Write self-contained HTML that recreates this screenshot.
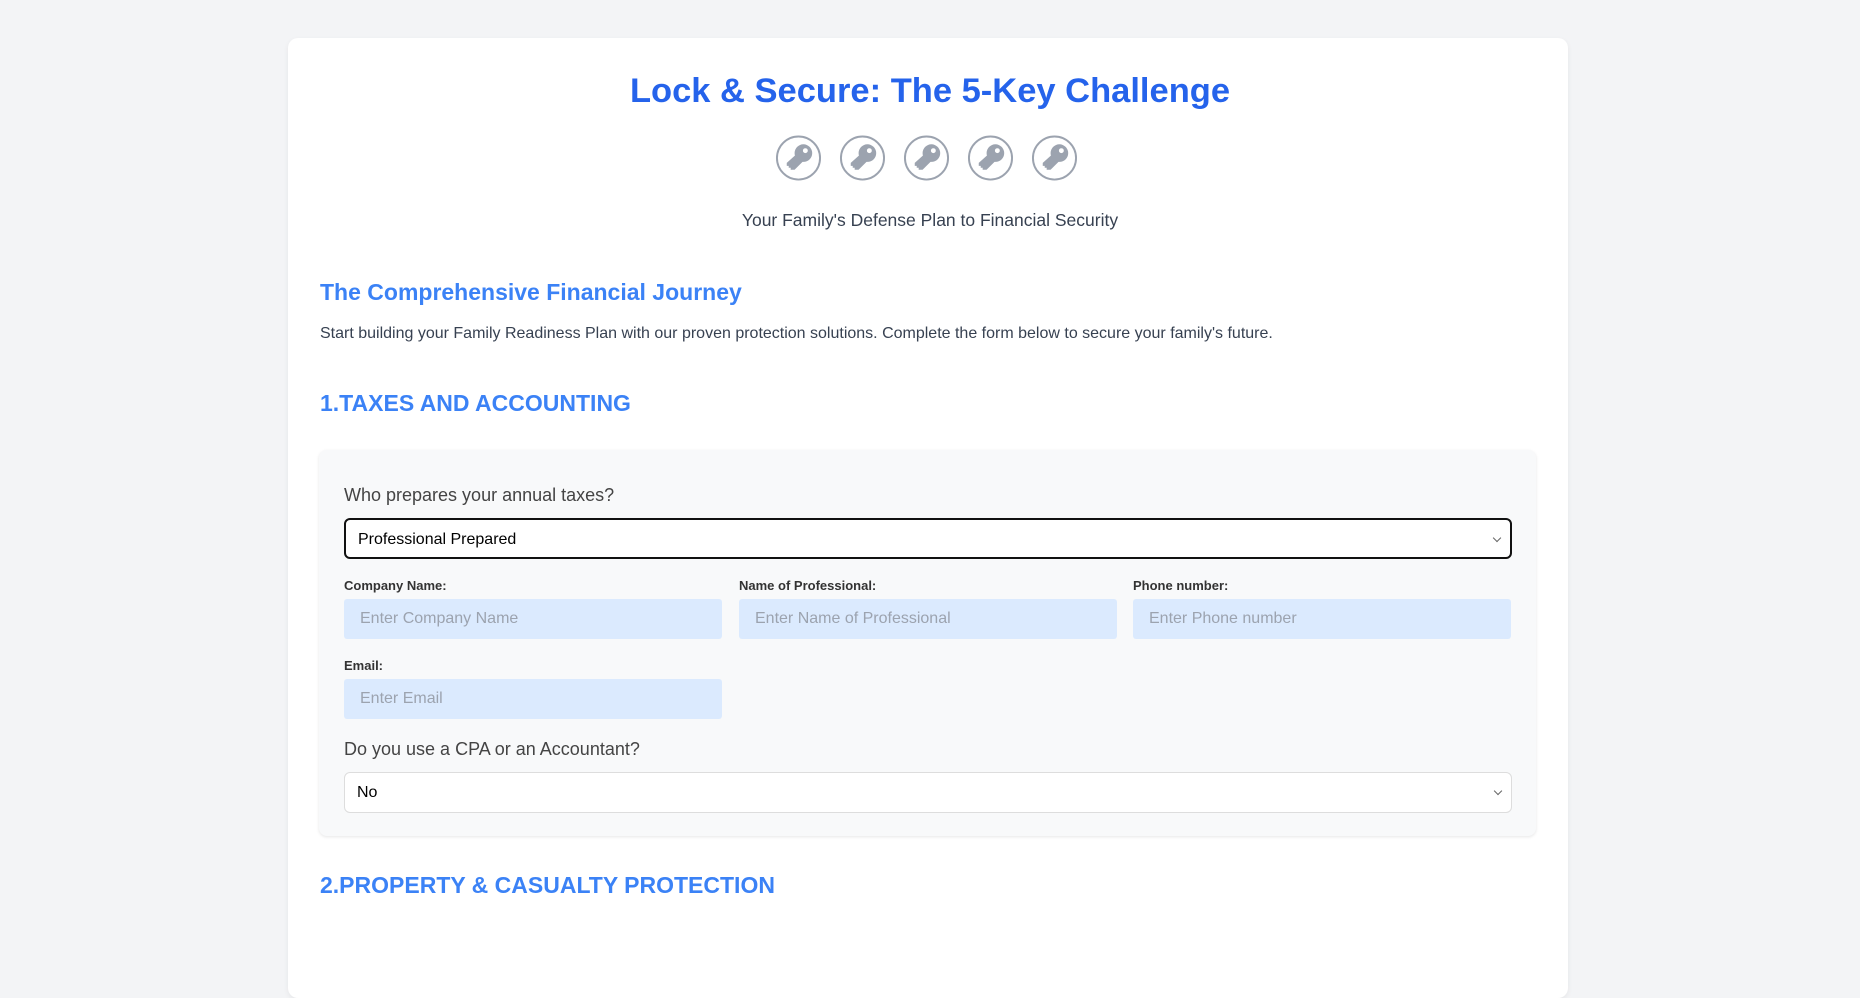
<!DOCTYPE html>
<html><head><meta charset="utf-8"><style>
*{box-sizing:border-box;margin:0;padding:0}
body{width:1860px;height:932px;overflow:hidden;background:#f3f4f6;font-family:"Liberation Sans",sans-serif;position:relative}
.card{position:absolute;left:288px;top:38px;width:1280px;height:960px;background:#fff;border-radius:10px;box-shadow:0 2px 6px rgba(0,0,0,.06)}
h1{position:absolute;left:0;width:1860px;text-align:center;top:72px;font-size:34.5px;color:#2563eb;font-weight:bold}
.keys{position:absolute;top:134px;left:-4px;width:1860px;display:flex;justify-content:center;gap:17px}
.keys svg{width:47px;height:48px}
.sub{position:absolute;top:210px;width:1860px;text-align:center;font-size:17.5px;color:#374151}
.h2{position:absolute;left:320px;font-size:23px;font-weight:bold;color:#3b82f6}
.p{position:absolute;left:320px;top:325px;font-size:16px;color:#374151}
.box{position:absolute;left:319px;top:450px;width:1217px;height:386px;background:#f8f9fa;border-radius:8px;box-shadow:0 1px 3px rgba(0,0,0,.1)}
.lbl{position:absolute;font-size:18px;color:#444}
.sel{position:absolute;left:344px;width:1168px;height:41px;background:#fff;border-radius:6px;font-size:16px;padding:0 12px;line-height:39px;color:#000}
.sel:after{content:"";position:absolute;right:10px;top:15px;width:5px;height:5px;border-right:1.5px solid #666;border-bottom:1.5px solid #666;transform:rotate(45deg)}
.fl{position:absolute;font-size:13px;font-weight:bold;color:#333}
.in{position:absolute;width:378px;height:40px;background:#dbeafe;border-radius:3px;font-size:16px;color:#9ca3af;padding-left:16px;line-height:40px}
</style></head><body>
<div class="card"></div>
<h1>Lock &amp; Secure: The 5-Key Challenge</h1>
<div class="keys">
<svg viewBox="0 0 48 48"><circle cx="24" cy="24" r="22" fill="none" stroke="#9ca3af" stroke-width="2"/><path d="M29 10a9 9 0 1 1 0 18a9 9 0 1 1 0-18zM31 14a2.5 2.5 0 1 0 0 5a2.5 2.5 0 1 0 0-5z" fill="#9ca3af" fill-rule="evenodd"/><path d="M22 20 29 27 20 36H16V34H14V32H12V29Z" fill="#9ca3af"/></svg>
<svg viewBox="0 0 48 48"><circle cx="24" cy="24" r="22" fill="none" stroke="#9ca3af" stroke-width="2"/><path d="M29 10a9 9 0 1 1 0 18a9 9 0 1 1 0-18zM31 14a2.5 2.5 0 1 0 0 5a2.5 2.5 0 1 0 0-5z" fill="#9ca3af" fill-rule="evenodd"/><path d="M22 20 29 27 20 36H16V34H14V32H12V29Z" fill="#9ca3af"/></svg>
<svg viewBox="0 0 48 48"><circle cx="24" cy="24" r="22" fill="none" stroke="#9ca3af" stroke-width="2"/><path d="M29 10a9 9 0 1 1 0 18a9 9 0 1 1 0-18zM31 14a2.5 2.5 0 1 0 0 5a2.5 2.5 0 1 0 0-5z" fill="#9ca3af" fill-rule="evenodd"/><path d="M22 20 29 27 20 36H16V34H14V32H12V29Z" fill="#9ca3af"/></svg>
<svg viewBox="0 0 48 48"><circle cx="24" cy="24" r="22" fill="none" stroke="#9ca3af" stroke-width="2"/><path d="M29 10a9 9 0 1 1 0 18a9 9 0 1 1 0-18zM31 14a2.5 2.5 0 1 0 0 5a2.5 2.5 0 1 0 0-5z" fill="#9ca3af" fill-rule="evenodd"/><path d="M22 20 29 27 20 36H16V34H14V32H12V29Z" fill="#9ca3af"/></svg>
<svg viewBox="0 0 48 48"><circle cx="24" cy="24" r="22" fill="none" stroke="#9ca3af" stroke-width="2"/><path d="M29 10a9 9 0 1 1 0 18a9 9 0 1 1 0-18zM31 14a2.5 2.5 0 1 0 0 5a2.5 2.5 0 1 0 0-5z" fill="#9ca3af" fill-rule="evenodd"/><path d="M22 20 29 27 20 36H16V34H14V32H12V29Z" fill="#9ca3af"/></svg>
</div>
<div class="sub">Your Family's Defense Plan to Financial Security</div>
<div class="h2" style="top:279px">The Comprehensive Financial Journey</div>
<div class="p">Start building your Family Readiness Plan with our proven protection solutions. Complete the form below to secure your family's future.</div>
<div class="h2" style="top:390px">1.TAXES AND ACCOUNTING</div>
<div class="box"></div>
<div class="lbl" style="left:344px;top:485px">Who prepares your annual taxes?</div>
<div class="sel" style="top:518px;border:2px solid #111">Professional Prepared</div>
<div class="fl" style="left:344px;top:578px">Company Name:</div>
<div class="fl" style="left:739px;top:578px">Name of Professional:</div>
<div class="fl" style="left:1133px;top:578px">Phone number:</div>
<div class="in" style="left:344px;top:599px">Enter Company Name</div>
<div class="in" style="left:739px;top:599px">Enter Name of Professional</div>
<div class="in" style="left:1133px;top:599px">Enter Phone number</div>
<div class="fl" style="left:344px;top:658px">Email:</div>
<div class="in" style="left:344px;top:679px">Enter Email</div>
<div class="lbl" style="left:344px;top:739px">Do you use a CPA or an Accountant?</div>
<div class="sel" style="top:772px;border:1px solid #ddd;line-height:39px">No</div>
<div class="h2" style="top:872px">2.PROPERTY &amp; CASUALTY PROTECTION</div>
</body></html>
